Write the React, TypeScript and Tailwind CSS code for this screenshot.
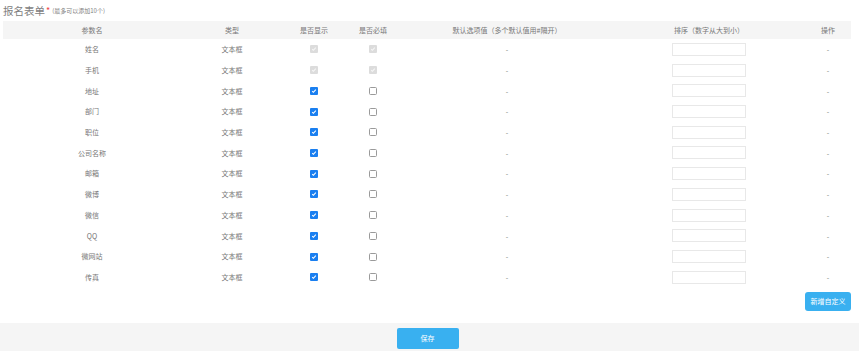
import React from 'react';

const rows = [
  { name: '姓名', locked: true, show: true, req: true },
  { name: '手机', locked: true, show: true, req: true },
  { name: '地址', show: true, req: false },
  { name: '部门', show: true, req: false },
  { name: '职位', show: true, req: false },
  { name: '公司名称', show: true, req: false },
  { name: '邮箱', show: true, req: false },
  { name: '微博', show: true, req: false },
  { name: '微信', show: true, req: false },
  { name: 'QQ', show: true, req: false },
  { name: '微网站', show: true, req: false },
  { name: '传真', show: true, req: false },
];

function Box({ checked, disabled }: { checked: boolean; disabled?: boolean }) {
  if (disabled) {
    return (
      <span className="inline-flex w-[8px] h-[8px] rounded-[1px] bg-[#dcdcdc] items-center justify-center">
        <svg width="6" height="6" viewBox="0 0 10 10">
          <path d="M2 5.2l2 2 4-4.4" fill="none" stroke="#f6f6f6" strokeWidth="1.8" />
        </svg>
      </span>
    );
  }
  if (checked) {
    return (
      <span className="inline-flex w-[8px] h-[8px] rounded-[1px] bg-[#1a7ff0] items-center justify-center">
        <svg width="6" height="6" viewBox="0 0 10 10">
          <path d="M2 5.2l2 2 4-4.4" fill="none" stroke="#fff" strokeWidth="1.8" />
        </svg>
      </span>
    );
  }
  return <span className="inline-block w-[8px] h-[8px] rounded-[1.5px] border border-[#9a9a9a] bg-white" />;
}

export default function App() {
  return (
    <div className="w-[859px] h-[351px] bg-white overflow-hidden flex flex-col text-[#777] font-['Noto_Sans_CJK_SC','Noto_Sans',sans-serif]">
      <div className="pl-[3px] h-[21px] flex items-center">
        <span className="text-[10.5px] text-[#808080]">报名表单</span>
        <span className="text-[9px] text-[#ef4444] ml-[1px]">*</span>
        <span className="text-[6px] text-[#808080] ml-[2px]">(最多可以添加10个)</span>
      </div>

      <div className="px-[3px] w-[855px]">
        <table className="w-[848px] table-fixed border-collapse text-[7px] text-center">
          <colgroup>
            <col className="w-[178px]" />
            <col className="w-[102px]" />
            <col className="w-[62px]" />
            <col className="w-[56px]" />
            <col className="w-[212px]" />
            <col className="w-[192px]" />
            <col className="w-[46px]" />
          </colgroup>
          <thead>
            <tr className="bg-[#f5f5f5] h-[18px]">
              <th className="font-normal">参数名</th>
              <th className="font-normal">类型</th>
              <th className="font-normal">是否显示</th>
              <th className="font-normal">是否必填</th>
              <th className="font-normal">默认选项值（多个默认值用#隔开）</th>
              <th className="font-normal">排序（数字从大到小）</th>
              <th className="font-normal">操作</th>
            </tr>
          </thead>
          <tbody>
            {rows.map((r) => (
              <tr key={r.name} className="h-[20.73px]">
                <td>{r.name}</td>
                <td>文本框</td>
                <td>
                  <div className="flex justify-center">
                    <Box checked={r.show} disabled={r.locked} />
                  </div>
                </td>
                <td>
                  <div className="flex justify-center">
                    <Box checked={r.req} disabled={r.locked} />
                  </div>
                </td>
                <td>-</td>
                <td>
                  <div className="flex justify-center">
                    <div className="w-[74px] h-[13px] border border-[#e8e8e8] bg-white" />
                  </div>
                </td>
                <td>-</td>
              </tr>
            ))}
          </tbody>
        </table>
      </div>

      <div className="flex justify-end pr-[8px] pt-[4px]">
        <button className="w-[46px] h-[19px] rounded-[3px] bg-[#39b0f0] text-white text-[7px]">新增自定义</button>
      </div>

      <div className="mt-[12px] flex-1 bg-[#f5f5f5] flex justify-center pt-[5px] pr-[4px]">
        <button className="w-[62px] h-[21px] rounded-[2px] bg-[#39b0f0] text-white text-[7px]">保存</button>
      </div>
    </div>
  );
}
